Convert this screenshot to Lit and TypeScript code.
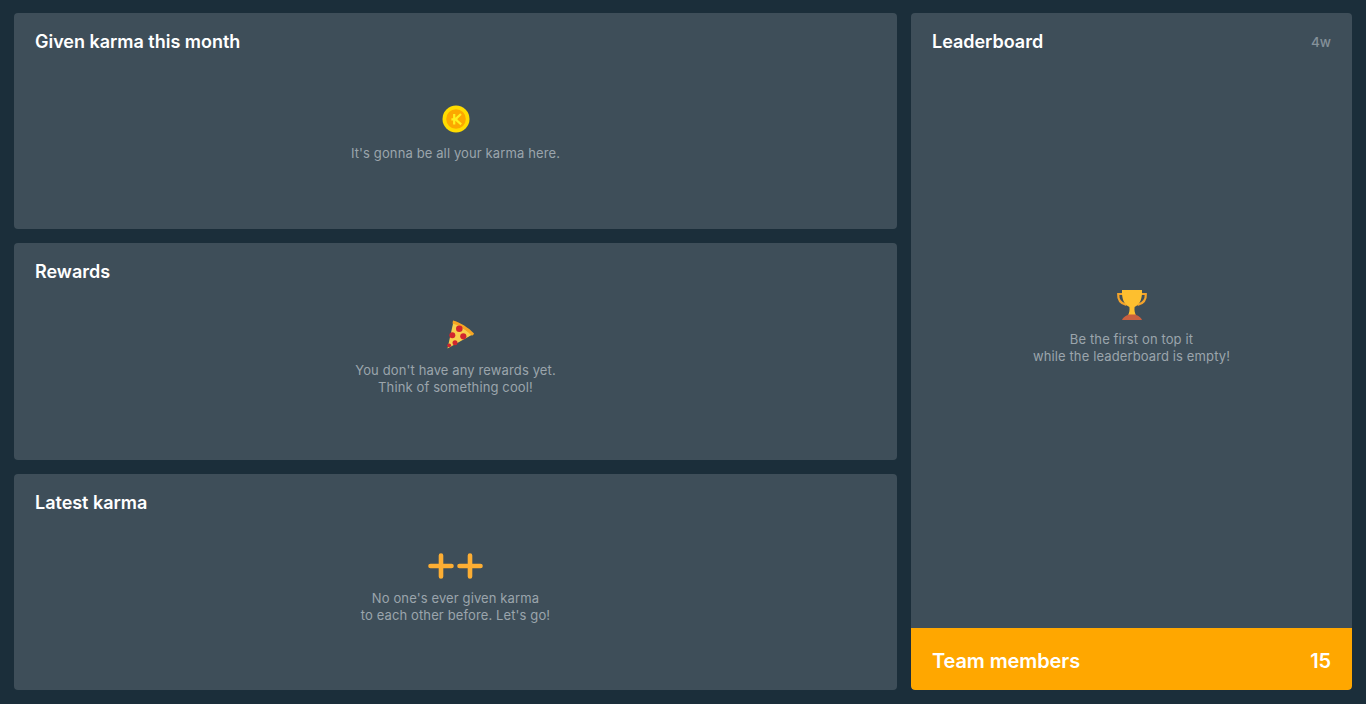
import { LitElement, html, css } from "lit";
import { customElement } from "lit/decorators.js";

const coin = html`<svg class="ic" width="28" height="28" viewBox="0 0 28 28">
  <circle cx="14" cy="14" r="13.5" fill="#ffdc00"/>
  <circle cx="14" cy="14" r="9.8" fill="#fca800"/>
  <path d="M12.2 9V19.4M19 9L13.4 14.3L19.2 19.4M9.4 14.3H15.6" fill="none" stroke="#fff01e" stroke-width="2.2"/>
</svg>`;

const pizza = html`<svg class="ic pizza" width="30" height="30" viewBox="0 0 30 30">
  <path d="M2.5 28.5L8.5 1.5L27.5 14.5Z" fill="#f8cf4c"/>
  <path d="M8 .6C15 2.4 24 8 29 13.6C28.6 14.8 27.9 15.4 27 15.8C22 10.4 15 5.4 7.5 3.4Z" fill="#f7a623"/>
  <circle cx="14.3" cy="8.7" r="3.3" fill="#d1262e"/>
  <circle cx="7.3" cy="15.3" r="3" fill="#d1262e"/>
  <circle cx="18.3" cy="16.3" r="3.1" fill="#d1262e"/>
  <circle cx="10" cy="22.7" r="2.5" fill="#d1262e"/>
  <circle cx="4.2" cy="25.3" r="1.9" fill="#d1262e"/>
</svg>`;

const trophy = html`<svg class="ic" width="32" height="32" viewBox="0 0 32 32">
  <path d="M7 5H2.2C1.8 11 4.5 14.5 10.5 16M25 5H29.8C30.2 11 27.5 14.5 21.5 16" fill="none" stroke="#f2a32c" stroke-width="2.2"/>
  <path d="M6 1H26C26.4 9 24.5 15 18.6 18C18.2 21 18.6 23.5 20 26.5H12C13.4 23.5 13.8 21 13.4 18C7.5 15 5.6 9 6 1Z" fill="#fdbf2f"/>
  <path d="M12.5 25.6H19.5C20.5 26.6 24 27 26 31H6C8 27 11.5 26.6 12.5 25.6Z" fill="#c9603f"/>
</svg>`;

const plus = html`<svg class="ic" width="56" height="26" viewBox="0 0 56 26">
  <path d="M13 2.5V23.5M2.5 13H23.5M42 2.5V23.5M31.5 13H52.5" fill="none" stroke="#fdae33" stroke-width="4.6" stroke-linecap="round"/>
</svg>`;

@customElement("app-root")
export class AppRoot extends LitElement {
  static styles = css`
    :host {
      display: block;
      font-family: Inter, "Liberation Sans", sans-serif;
    }
    .page {
      box-sizing: border-box;
      height: 704px;
      padding: 13px 14px 14px;
      background: #1b2e3a;
      display: grid;
      grid-template-columns: 883px 441px;
      grid-template-rows: repeat(3, 1fr);
      column-gap: 14px;
      row-gap: 14px;
      overflow: hidden;
    }
    .card {
      background: #3e4e59;
      border-radius: 4px;
      display: flex;
      flex-direction: column;
      min-height: 0;
      overflow: hidden;
    }
    .side {
      grid-column: 2;
      grid-row: 1 / span 3;
    }
    .main-col {
      grid-column: 1;
    }
    .head {
      display: flex;
      justify-content: space-between;
      align-items: center;
      padding: 18px 21px 0;
      height: 22px;
      flex: none;
    }
    .title {
      font-size: 18px;
      line-height: 22px;
      font-weight: 600;
      letter-spacing: -0.02px;
      color: #fff;
    }
    .range {
      font-size: 13.5px;
      font-weight: 500;
      color: #85919a;
    }
    .empty {
      display: flex;
      flex-direction: column;
      align-items: center;
      font-size: 13px;
      line-height: 17px;
      letter-spacing: 0.12px;
      color: #9ba5ac;
      text-align: center;
    }
    .ic {
      display: block;
      flex: none;
    }
    .pizza {
      margin-left: 9px;
    }
    .e1 { padding-top: 52px; }
    .e1 .ic { margin-bottom: 12px; }
    .e2 { padding-top: 37px; }
    .e2 .ic { margin-bottom: 12px; }
    .e3 { padding-top: 39px; }
    .e3 .ic { margin-bottom: 11px; }
    .e4 {
      flex: 1;
      justify-content: center;
      padding-bottom: 27px;
    }
    .e4 .ic { margin-bottom: 10px; }
    .team {
      flex: none;
      height: 62px;
      box-sizing: border-box;
      padding: 4px 21px 0;
      background: #ffa700;
      color: #fff;
      display: flex;
      justify-content: space-between;
      align-items: center;
      font-size: 20px;
      font-weight: 600;
      letter-spacing: -0.1px;
      border-radius: 0 0 4px 4px;
    }
    .team b { font-weight: 600; }
  `;

  render() {
    return html`<div class="page">
      <section class="card main-col">
        <div class="head"><span class="title">Given karma this month</span></div>
        <div class="empty e1">${coin}<div>It's gonna be all your karma here.</div></div>
      </section>
      <section class="card side">
        <div class="head"><span class="title">Leaderboard</span><span class="range">4w</span></div>
        <div class="empty e4">${trophy}<div>Be the first on top it<br />while the leaderboard is empty!</div></div>
        <div class="team"><span>Team members</span><b>15</b></div>
      </section>
      <section class="card main-col">
        <div class="head"><span class="title">Rewards</span></div>
        <div class="empty e2">${pizza}<div>You don't have any rewards yet.<br />Think of something cool!</div></div>
      </section>
      <section class="card main-col">
        <div class="head"><span class="title">Latest karma</span></div>
        <div class="empty e3">${plus}<div>No one's ever given karma<br />to each other before. Let's go!</div></div>
      </section>
    </div>`;
  }
}
